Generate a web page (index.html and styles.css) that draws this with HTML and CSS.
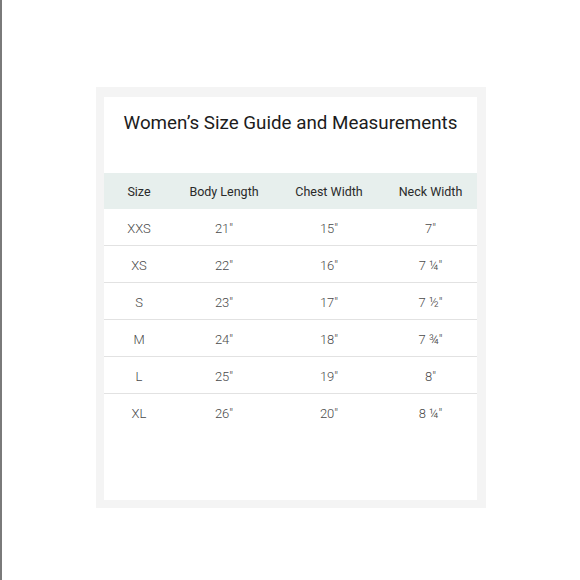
FILE: index.html
```html
<!DOCTYPE html>
<html>
<head>
<meta charset="utf-8">
<link rel="stylesheet" href="styles.css">
</head>
<body>
<div class="page">
  <div class="frame">
    <div class="card">
      <h1 class="title">Women’s Size Guide and Measurements</h1>
      <div class="table">
        <div class="row head">
          <div class="cell">Size</div>
          <div class="cell">Body Length</div>
          <div class="cell">Chest Width</div>
          <div class="cell">Neck Width</div>
        </div>
        <div class="row">
          <div class="cell">XXS</div><div class="cell">21″</div><div class="cell">15″</div><div class="cell">7″</div>
        </div>
        <div class="row">
          <div class="cell">XS</div><div class="cell">22″</div><div class="cell">16″</div><div class="cell">7 ¼″</div>
        </div>
        <div class="row">
          <div class="cell">S</div><div class="cell">23″</div><div class="cell">17″</div><div class="cell">7 ½″</div>
        </div>
        <div class="row">
          <div class="cell">M</div><div class="cell">24″</div><div class="cell">18″</div><div class="cell">7 ¾″</div>
        </div>
        <div class="row">
          <div class="cell">L</div><div class="cell">25″</div><div class="cell">19″</div><div class="cell">8″</div>
        </div>
        <div class="row last">
          <div class="cell">XL</div><div class="cell">26″</div><div class="cell">20″</div><div class="cell">8 ¼″</div>
        </div>
      </div>
    </div>
  </div>
</div>
</body>
</html>
```
FILE: styles.css
```css
html, body {
  margin: 0;
  padding: 0;
  background: #ffffff;
}
body {
  font-family: Roboto, "Liberation Sans", sans-serif;
}
.page {
  width: 580px;
  height: 580px;
  box-sizing: border-box;
  border-left: 2px solid #7a7a7a;
  padding-top: 87px;
  padding-left: 94px;
}
.frame {
  width: 390px;
  box-sizing: border-box;
  border: 8px solid #f4f4f4;
  border-top-width: 10px;
  border-right-width: 9px;
  background: #ffffff;
}
.card {
  height: 403px;
  background: #ffffff;
}
.title {
  margin: 0;
  padding-top: 14px;
  height: 76px;
  box-sizing: border-box;
  text-align: center;
  font-size: 18.8px;
  font-weight: 400;
  color: #1c1c1c;
  line-height: 24px;
}
.table {
  display: flex;
  flex-direction: column;
}
.row {
  display: grid;
  grid-template-columns: 70px 100px 110px 93px;
  height: 37px;
  align-items: center;
  border-bottom: 1px solid #e2e2e2;
  box-sizing: border-box;
  font-size: 13px;
  color: #4a4a4a;
  font-weight: 300;
}
.row.head {
  height: 36px;
  background: #e7efed;
  border-bottom: none;
  color: #2a2a2a;
  font-weight: 400;
  font-size: 12.5px;
}
.row.head .cell {
  padding-top: 0;
}
.row.last {
  border-bottom: none;
}
.cell {
  text-align: center;
  padding-top: 2px;
}
```
